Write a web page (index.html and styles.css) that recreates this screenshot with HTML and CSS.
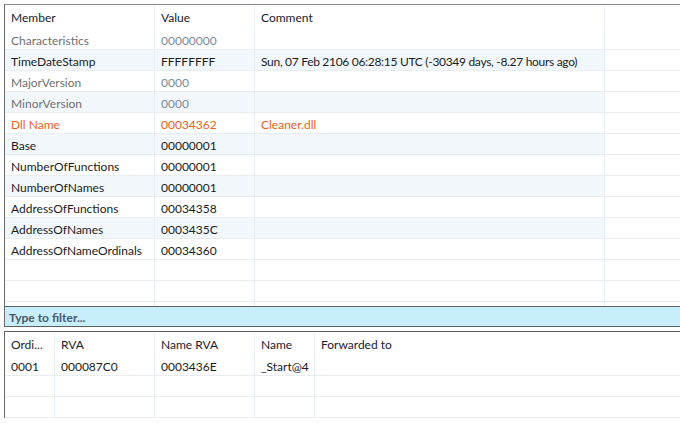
FILE: index.html
```html
<!DOCTYPE html>
<html>
<head>
<meta charset="utf-8">
<link rel="stylesheet" href="styles.css">
</head>
<body>
<div class="app">
  <div class="panel upper">
    <div class="row head">
      <div class="c c1">Member</div><div class="c c2">Value</div><div class="c c3">Comment</div><div class="c c4"></div>
    </div>
    <div class="row dim"><div class="c c1">Characteristics</div><div class="c c2">00000000</div><div class="c c3"></div><div class="c c4"></div></div>
    <div class="row alt"><div class="c c1">TimeDateStamp</div><div class="c c2">FFFFFFFF</div><div class="c c3 tight">Sun, 07 Feb 2106 06:28:15 UTC (-30349 days, -8.27 hours ago)</div><div class="c c4"></div></div>
    <div class="row dim"><div class="c c1">MajorVersion</div><div class="c c2">0000</div><div class="c c3"></div><div class="c c4"></div></div>
    <div class="row dim alt"><div class="c c1">MinorVersion</div><div class="c c2">0000</div><div class="c c3"></div><div class="c c4"></div></div>
    <div class="row hot"><div class="c c1">Dll Name</div><div class="c c2">00034362</div><div class="c c3">Cleaner.dll</div><div class="c c4"></div></div>
    <div class="row alt"><div class="c c1">Base</div><div class="c c2">00000001</div><div class="c c3"></div><div class="c c4"></div></div>
    <div class="row"><div class="c c1">NumberOfFunctions</div><div class="c c2">00000001</div><div class="c c3"></div><div class="c c4"></div></div>
    <div class="row alt"><div class="c c1">NumberOfNames</div><div class="c c2">00000001</div><div class="c c3"></div><div class="c c4"></div></div>
    <div class="row"><div class="c c1">AddressOfFunctions</div><div class="c c2">00034358</div><div class="c c3"></div><div class="c c4"></div></div>
    <div class="row alt"><div class="c c1">AddressOfNames</div><div class="c c2">0003435C</div><div class="c c3"></div><div class="c c4"></div></div>
    <div class="row"><div class="c c1">AddressOfNameOrdinals</div><div class="c c2">00034360</div><div class="c c3"></div><div class="c c4"></div></div>
    <div class="row"><div class="c c1"></div><div class="c c2"></div><div class="c c3"></div><div class="c c4"></div></div>
    <div class="row"><div class="c c1"></div><div class="c c2"></div><div class="c c3"></div><div class="c c4"></div></div>
    <div class="row stub"><div class="c c1"></div><div class="c c2"></div><div class="c c3"></div><div class="c c4"></div></div>
  </div>
  <div class="filter">Type to filter...</div>
  <div class="panel lower">
    <div class="lrow head">
      <div class="c">Ordi...</div><div class="c">RVA</div><div class="c">Name RVA</div><div class="c">Name</div><div class="c last">Forwarded to</div>
    </div>
    <div class="lrow"><div class="c">0001</div><div class="c">000087C0</div><div class="c">0003436E</div><div class="c">_Start@4</div><div class="c last"></div></div>
    <div class="lrow"><div class="c"></div><div class="c"></div><div class="c"></div><div class="c"></div><div class="c last"></div></div>
    <div class="lrow"><div class="c"></div><div class="c"></div><div class="c"></div><div class="c"></div><div class="c last"></div></div>
  </div>
</div>
</body>
</html>
```
FILE: styles.css
```css
html, body {
  margin: 0;
  padding: 0;
  background: #ffffff;
}
body {
  font-family: Lato, "Noto Sans", sans-serif;
  font-size: 12px;
  color: #1b1b1b;
  width: 680px;
  height: 423px;
  overflow: hidden;
}
.app {
  padding: 4px 0 0 4px;
  display: flex;
  flex-direction: column;
}
.panel {
  border-left: 1px solid #6a6a6a;
  overflow: hidden;
}
.upper {
  border-top: 1px solid #8a8a8a;
  height: 301px;
}
.row {
  display: grid;
  grid-template-columns: 150px 100px 350px 1fr;
  height: 20px;
  border-bottom: 1px solid #eaedf0;
}
.row.head {
  height: 24px;
  border-bottom: none;
  color: #1a1a2e;
}
.row.stub {
  border-bottom: none;
}
.c {
  border-right: 1px solid #e6edf4;
  padding-left: 6px;
  padding-top: 2px;
  line-height: 20px;
  height: 20px;
  box-sizing: border-box;
  white-space: nowrap;
  overflow: hidden;
}
.c.tight {
  letter-spacing: -0.3px;
}
.head .c {
  height: auto;
  line-height: 24px;
  padding-top: 1px;
  border-right-color: #edf1f5;
}
.c4 {
  border-right: none;
}
.row.alt .c1, .row.alt .c2, .row.alt .c3 {
  background: #f2f7fc;
}
.row.dim .c1 {
  color: #707070;
}
.row.dim .c2 {
  color: #7b8a9b;
}
.row.hot .c {
  color: #e8621c;
}
.filter {
  border-top: 1px solid #5f5f5f;
  border-bottom: 1px solid #5f5f5f;
  border-left: 1px solid #6a6a6a;
  background: #c8eefc;
  font-weight: bold;
  color: #4b5868;
  padding-left: 4px;
  padding-top: 1px;
  box-sizing: border-box;
  height: 21px;
  line-height: 19px;
}
.lower {
  margin-top: 4px;
  border-top: 1px solid #5f5f5f;
  flex: 1;
  height: 100px;
}
.lrow {
  display: grid;
  grid-template-columns: 50px 100px 100px 60px 1fr;
  height: 20px;
  border-bottom: 1px solid #eaedf0;
}
.lrow.head {
  height: 23px;
  border-bottom: none;
  color: #1a1a2e;
}
.lrow.head .c {
  line-height: 23px;
}
.c.last {
  border-right: none;
}
```
